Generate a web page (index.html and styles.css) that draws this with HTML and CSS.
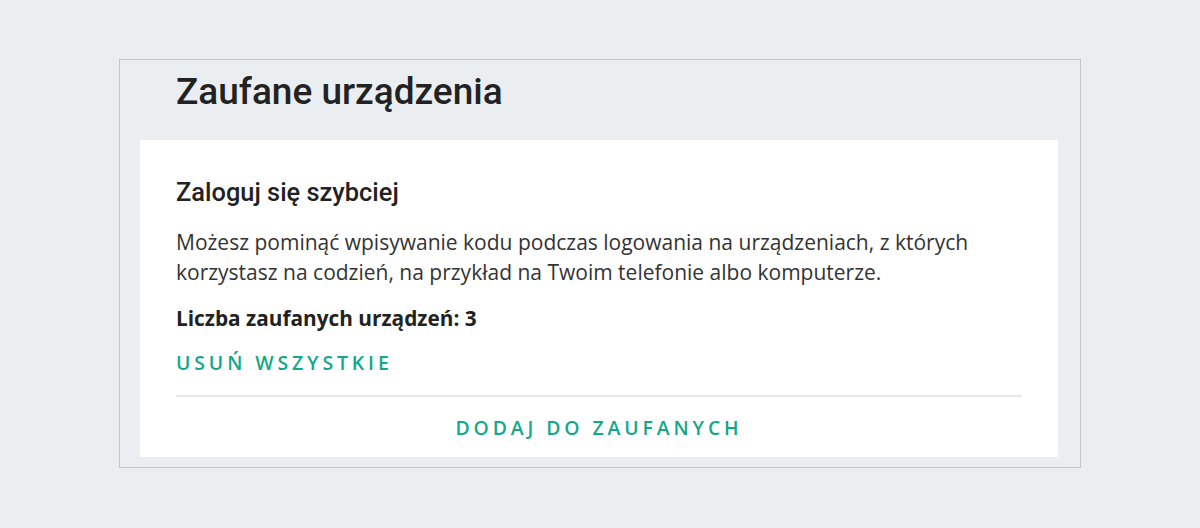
FILE: index.html
```html
<!DOCTYPE html>
<html lang="pl">
<head>
  <meta charset="UTF-8" />
  <meta name="viewport" content="width=device-width, initial-scale=1" />
  <title>Zaufane urządzenia</title>
  <link rel="stylesheet" href="styles.css">
</head>
<body>
  <div class="panel">
    <h1>Zaufane urządzenia</h1>

    <div class="card">
      <h2>Zaloguj się szybciej</h2>
      <p class="desc">Możesz pominąć wpisywanie kodu podczas logowania na urządzeniach, z których korzystasz na codzień, na przykład na Twoim telefonie albo komputerze.</p>
      <p class="count">Liczba zaufanych urządzeń: 3</p>
      <a href="#" class="link">Usuń wszystkie</a>
      <div class="divider"></div>
      <div class="actions">
        <a href="#" class="link">Dodaj do zaufanych</a>
      </div>
    </div>
  </div>
</body>
</html>
```

FILE: styles.css
```css
body {
  margin: 0;
  padding: 59px 0 0;
  background-color: #ebeef1;
  font-family: "Open Sans", Arial, sans-serif;
  color: #333;
}

.panel {
  width: 962px;
  margin: 0 auto;
  border: 1px solid #c3c5c8;
  box-sizing: border-box;
  padding: 0 22px 10px 20px;
}

h1 {
  font-family: Roboto, Arial, sans-serif;
  font-weight: 500;
  font-size: 37px;
  line-height: 40px;
  color: #222;
  margin: 12px 0 28px 36px;
}

.card {
  background: #fff;
  padding: 38px 36px 14px;
}

h2 {
  font-family: Roboto, Arial, sans-serif;
  font-weight: 500;
  font-size: 25.4px;
  line-height: 28px;
  color: #222;
  margin: 0 0 21px;
}

.desc {
  font-size: 21px;
  line-height: 30px;
  margin: 0;
}

.count {
  font-size: 20.8px;
  line-height: 30px;
  font-weight: 700;
  color: #222;
  margin: 16px 0 15px;
}

.link {
  display: inline-block;
  font-size: 19.4px;
  line-height: 30px;
  font-weight: 600;
  letter-spacing: 3.9px;
  text-transform: uppercase;
  text-decoration: none;
  color: #12a88c;
}

.divider {
  height: 2px;
  background: #e8e8e8;
  margin: 17px 0 16px;
}

.actions {
  text-align: center;
}
```
